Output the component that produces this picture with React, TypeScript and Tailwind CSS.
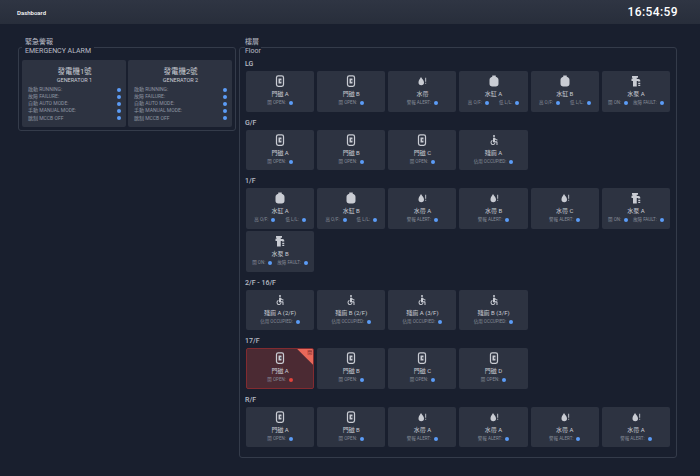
import { MdAccessible } from "react-icons/md";

type Kind = "door" | "leak" | "tank" | "pump" | "toilet";

type Device = { kind: Kind; name: string; alarm?: boolean };

const FONT = "font-['Roboto','Noto_Sans_CJK_TC',sans-serif]";

const STATUS: Record<Kind, string[]> = {
  door: ["開 OPEN:"],
  leak: ["警報 ALERT:"],
  tank: ["高 O/F:", "低 L/L:"],
  pump: ["開 ON:", "故障 FAULT:"],
  toilet: ["佔用 OCCUPIED:"],
};

const GEN_ROWS = ["啟動 RUNNING:", "故障 FAILURE:", "自動 AUTO MODE:", "手動 MANUAL MODE:", "跳制 MCCB OFF"];

const FLOORS: { name: string; devices: Device[] }[] = [
  {
    name: "LG",
    devices: [
      { kind: "door", name: "門磁 A" },
      { kind: "door", name: "門磁 B" },
      { kind: "leak", name: "水帶" },
      { kind: "tank", name: "水缸 A" },
      { kind: "tank", name: "水缸 B" },
      { kind: "pump", name: "水泵 A" },
    ],
  },
  {
    name: "G/F",
    devices: [
      { kind: "door", name: "門磁 A" },
      { kind: "door", name: "門磁 B" },
      { kind: "door", name: "門磁 C" },
      { kind: "toilet", name: "殘廁 A" },
    ],
  },
  {
    name: "1/F",
    devices: [
      { kind: "tank", name: "水缸 A" },
      { kind: "tank", name: "水缸 B" },
      { kind: "leak", name: "水帶 A" },
      { kind: "leak", name: "水帶 B" },
      { kind: "leak", name: "水帶 C" },
      { kind: "pump", name: "水泵 A" },
      { kind: "pump", name: "水泵 B" },
    ],
  },
  {
    name: "2/F - 16/F",
    devices: [
      { kind: "toilet", name: "殘廁 A (2/F)" },
      { kind: "toilet", name: "殘廁 B (2/F)" },
      { kind: "toilet", name: "殘廁 A (3/F)" },
      { kind: "toilet", name: "殘廁 B (3/F)" },
    ],
  },
  {
    name: "17/F",
    devices: [
      { kind: "door", name: "門磁 A", alarm: true },
      { kind: "door", name: "門磁 B" },
      { kind: "door", name: "門磁 C" },
      { kind: "door", name: "門磁 D" },
    ],
  },
  {
    name: "R/F",
    devices: [
      { kind: "door", name: "門磁 A" },
      { kind: "door", name: "門磁 B" },
      { kind: "leak", name: "水帶 A" },
      { kind: "leak", name: "水帶 A" },
      { kind: "leak", name: "水帶 A" },
      { kind: "leak", name: "水帶 A" },
    ],
  },
];

function DeviceIcon({ kind }: { kind: Kind }) {
  if (kind === "door") {
    return (
      <svg viewBox="0 0 24 24" className="h-[12px] w-[12px]" fill="none">
        <rect x="5" y="1.500" width="14" height="21" rx="3.500" stroke="currentColor" strokeWidth="2.500" />
        <path d="M9 7h6v10H9z" fill="currentColor" />
        <path d="M12.500 10.500h2.500v3h-2.500z" fill="#1d2331" />
      </svg>
    );
  }
  if (kind === "toilet") return <MdAccessible className="h-[12px] w-[12px]" />;
  if (kind === "leak") {
    return (
      <svg viewBox="0 0 24 24" className="h-[12px] w-[12px]" fill="currentColor">
        <path d="M10 4C7.500 8 5 10.800 5 15a5.500 5.500 0 0 0 11 0c0-4.200-3.500-7-6-11z" />
        <path d="M18.500 5.500h1.800v8h-1.800zM18.500 15.500h1.800v2.200h-1.800z" />
      </svg>
    );
  }
  if (kind === "tank") {
    return (
      <svg viewBox="0 0 24 24" className="h-[12px] w-[12px]" fill="currentColor">
        <path d="M8.500 1h7v2.500c3.400.9 5.500 3 5.500 6.500v7.500c0 3.300-2.200 5.500-5.500 5.500h-7C5.200 23 3 20.800 3 17.500V10c0-3.500 2.100-5.600 5.500-6.500z" />
      </svg>
    );
  }
  return (
    <svg viewBox="0 0 24 24" className="h-[12px] w-[12px]" fill="currentColor">
      <path d="M4 2h12v3.500h-2.500V8H17c2 0 3.500 1.500 3.500 3.500V13H16v-1h-2.500v11H6V12H3V7.500h2V5.500H4z" />
      <path d="M16.500 15.500h4v2.500h-4zM16.500 19.500h4V22h-4z" />
    </svg>
  );
}

function Dot({ red }: { red?: boolean }) {
  return <span className={red ? "h-[4px] w-[4px] rounded-full bg-[#e0443c]" : "h-[4px] w-[4px] rounded-full bg-[#5b9cf6]"} />;
}

function DeviceCard({ device }: { device: Device }) {
  const { kind, name, alarm } = device;
  return (
    <div
      className={
        alarm
          ? "relative flex h-[40.500px] flex-col items-center overflow-hidden rounded-[2px] border border-[#822b30] bg-[#4b2a33] pt-[3px]"
          : "relative flex h-[40.500px] flex-col items-center overflow-hidden rounded-[2px] bg-[#2d3341] pt-[4px]"
      }
    >
      {alarm && (
        <div className="absolute right-0 top-0 flex h-[16px] w-[16px] justify-end bg-[#e8695a] pr-px text-[5px] leading-[7px] text-[#7a2a2a] [clip-path:polygon(0_0,100%_0,100%_100%)]">
          開
        </div>
      )}
      <div className="text-[#c9ccd3]">
        <DeviceIcon kind={kind} />
      </div>
      <div className="mt-[3px] text-[6px] leading-[8px] text-[#c9ccd3]">{name}</div>
      <div className={kind === "pump" ? "mt-[2px] flex items-center justify-center gap-[5px]" : "mt-[2px] flex items-center justify-center gap-[10px]"}>
        {STATUS[kind].map((label) => (
          <div key={label} className="flex items-center gap-[3px] text-[4.500px] leading-[6px] text-[#878d99]">
            <span>{label}</span>
            <Dot red={alarm} />
          </div>
        ))}
      </div>
    </div>
  );
}

function Generator({ no }: { no: number }) {
  return (
    <div className="flex-1 rounded-[2px] bg-[#2d3341] pb-[5.500px] pl-[6px] pr-[5px] pt-[6px]">
      <div className="text-center text-[7.500px] leading-[11px] text-[#c9ccd3]">發電機{no}號</div>
      <div className="text-center text-[5.500px] leading-[7px] text-[#c9ccd3]">GENERATOR {no}</div>
      <div className="mt-[2px] flex flex-col">
        {GEN_ROWS.map((row) => (
          <div key={row} className="flex h-[7.200px] items-center justify-between text-[5px] text-[#8f95a1]">
            <span>{row}</span>
            <Dot />
          </div>
        ))}
      </div>
    </div>
  );
}

export default function App() {
  return (
    <div className={`${FONT} min-h-[476px] w-[700px] bg-[#191f2e]`}>
      <header className="flex h-[24px] items-center justify-between bg-gradient-to-b from-[#2f3543] to-[#282e3b] pl-[17px] pr-[22px]">
        <span className="text-[6px] font-medium text-white">Dashboard</span>
        <span className="text-[12px] font-medium tracking-[0.4px] text-white">16:54:59</span>
      </header>

      <main className="flex items-start gap-[3px] pl-[18px] pt-[14px]">
        <fieldset className="w-[218px] rounded-[3px] border border-[#343b4a] px-[3px] pb-[3px]">
          <legend className="px-[3px] text-[7px] leading-[9px] text-[#b9bdc6]">
            <div>緊急警報</div>
            <div>EMERGENCY ALARM</div>
          </legend>
          <div className="mt-[4px] flex gap-[2px]">
            <Generator no={1} />
            <Generator no={2} />
          </div>
        </fieldset>

        <fieldset className="w-[438px] rounded-[3px] border border-[#343b4a] pb-[10px] pl-[5px] pr-[6px]">
          <legend className="text-[7px] leading-[9px] text-[#b9bdc6]">
            <div>樓層</div>
            <div>Floor</div>
          </legend>
          <div className="mt-[4px] flex flex-col gap-[7px]">
            {FLOORS.map((floor) => (
              <section key={floor.name}>
                <h3 className="mb-[2px] text-[7px] leading-[9px] font-medium text-[#b9bdc6]">{floor.name}</h3>
                <div className="ml-px grid grid-cols-6 gap-x-[3px] gap-y-[2.500px]">
                  {floor.devices.map((device, i) => (
                    <DeviceCard key={i} device={device} />
                  ))}
                </div>
              </section>
            ))}
          </div>
        </fieldset>
      </main>
    </div>
  );
}
